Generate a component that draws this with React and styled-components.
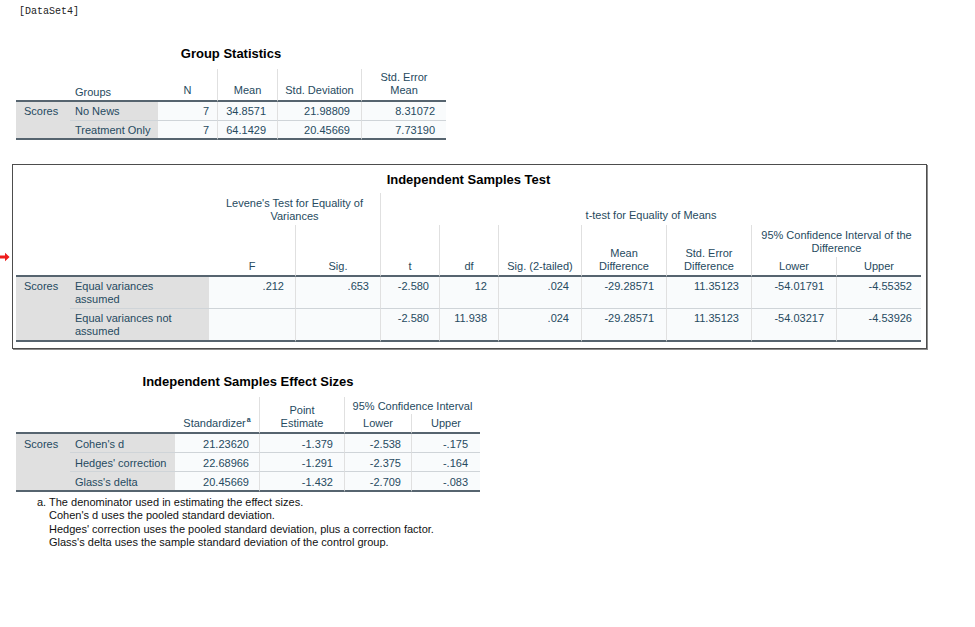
import React from 'react';
import styled, { createGlobalStyle } from 'styled-components';

const Global = createGlobalStyle`
  html, body { margin: 0; padding: 0; background: #ffffff; }
  body { font-family: "Liberation Sans", Arial, sans-serif; }
`;

const INK = '#264a60';
const RULE = '#56646f';
const GRID = '#e0e0e0';
const SEP = '#cfd4d8';

const Page = styled.div`
  position: relative;
  width: 975px;
  height: 627px;
  overflow: hidden;
  box-sizing: border-box;
  padding-top: 6px;
  display: flex;
  flex-direction: column;
  align-items: flex-start;
`;

const DataSetLabel = styled.div`
  margin-left: 19px;
  font-family: "Liberation Mono", "Courier New", monospace;
  font-size: 10px;
  line-height: 12px;
  color: #222;
`;

const Section = styled.section`
  position: relative;
  display: flex;
  flex-direction: column;
  margin-left: ${p => p.$ml}px;
  margin-top: ${p => p.$mt}px;
`;

const BoxedSection = styled(Section)`
  border: 1px solid #4d4d4d;
  box-shadow: 1px 1px 0 #8c8c8c;
  padding: 7px 5px 6px 3px;
`;

const Title = styled.div`
  text-align: center;
  font-weight: bold;
  font-size: 13px;
  line-height: 16px;
  color: #000;
  margin-bottom: ${p => p.$gap}px;
`;

const Table = styled.table`
  border-collapse: separate;
  border-spacing: 0;
  table-layout: fixed;
  font-size: 11px;
  color: ${INK};
`;

const Col = styled.col`
  width: ${p => p.$w}px;
`;

const Row = styled.tr`
  height: ${p => p.$h}px;
`;

const HeadCell = styled.th`
  box-sizing: border-box;
  padding: 0 2px ${p => (p.$pb ?? 3)}px;
  font-weight: normal;
  text-align: center;
  vertical-align: bottom;
  line-height: 13px;
  background: #ffffff;
  white-space: nowrap;
  border-left: ${p => (p.$divider ? `1px solid ${GRID}` : '0')};
  border-bottom: ${p => (p.$base ? `2px solid ${RULE}` : '0')};
`;

const StubHead = styled(HeadCell)`
  text-align: left;
  padding-left: 5px;
`;

const Sup = styled.sup`
  font-size: 7px;
  font-weight: bold;
  line-height: 0;
  vertical-align: 5px;
  margin-left: 1px;
`;

const StubCell = styled.td`
  box-sizing: border-box;
  background: #e0e0e0;
  text-align: left;
  vertical-align: top;
  white-space: nowrap;
  line-height: 13px;
  padding: ${p => p.$pt}px 4px 0 ${p => p.$pl}px;
  border-bottom: ${p => (p.$last ? `2px solid ${RULE}` : `1px solid ${SEP}`)};
`;

const ValueCell = styled.td`
  box-sizing: border-box;
  background: #f9fbfc;
  text-align: right;
  vertical-align: top;
  white-space: nowrap;
  line-height: 13px;
  padding: ${p => p.$pt}px ${p => p.$pr ?? 11}px 0 2px;
  border-left: ${p => (p.$first ? '0' : `1px solid ${GRID}`)};
  border-bottom: ${p => (p.$last ? `2px solid ${RULE}` : `1px solid ${SEP}`)};
`;

const Footnote = styled.div`
  margin-top: 4px;
  padding-left: 21px;
  font-size: 11px;
  line-height: 13.33px;
  color: #111;
`;

const FootLine = styled.div`
  padding-left: ${p => (p.$indent ? 12 : 0)}px;
  white-space: nowrap;
`;

const Marker = styled.svg`
  position: absolute;
  left: -13px;
  top: 87px;
  width: 10px;
  height: 10px;
`;

function ValueRow({ h, stub, cells, last, rowLabel, rowSpan, pr, pt = 4 }) {
  return (
    <Row $h={h}>
      {rowLabel && (
        <StubCell rowSpan={rowSpan} $pl={8} $pt={pt} $last>
          {rowLabel}
        </StubCell>
      )}
      <StubCell $pl={5} $pt={pt} $last={last}>
        {stub}
      </StubCell>
      {cells.map((v, i) => (
        <ValueCell key={i} $first={i === 0} $last={last} $pt={pt} $pr={pr ? pr[i] : undefined}>
          {v}
        </ValueCell>
      ))}
    </Row>
  );
}

function GroupStatistics() {
  const rows = [
    ['No News', ['7', '34.8571', '21.98809', '8.31072']],
    ['Treatment Only', ['7', '64.1429', '20.45669', '7.73190']],
  ];
  return (
    <Section $ml={16} $mt={28}>
      <Title $gap={7}>Group Statistics</Title>
      <Table>
        <colgroup>
          {[54, 88, 59, 60, 84, 85].map((w, i) => (
            <Col key={i} $w={w} />
          ))}
        </colgroup>
        <thead>
          <Row $h={33}>
            <HeadCell $base />
            <StubHead $base $pb={1}>Groups</StubHead>
            <HeadCell $base $pb={3}>N</HeadCell>
            <HeadCell $base $divider $pb={3}>Mean</HeadCell>
            <HeadCell $base $divider $pb={3}>Std. Deviation</HeadCell>
            <HeadCell $base $divider $pb={3}>Std. Error<br />Mean</HeadCell>
          </Row>
        </thead>
        <tbody>
          {rows.map(([stub, cells], i) => (
            <ValueRow
              key={stub}
              h={19}
              pt={3}
              stub={stub}
              cells={cells}
              last={i === rows.length - 1}
              rowLabel={i === 0 ? 'Scores' : null}
              rowSpan={rows.length}
              pr={[8, 11, 11, 11]}
            />
          ))}
        </tbody>
      </Table>
    </Section>
  );
}

function IndependentSamplesTest() {
  const rows = [
    [<>Equal variances<br />assumed</>, ['.212', '.653', '-2.580', '12', '.024', '-29.28571', '11.35123', '-54.01791', '-4.55352']],
    [<>Equal variances not<br />assumed</>, ['', '', '-2.580', '11.938', '.024', '-29.28571', '11.35123', '-54.03217', '-4.53926']],
  ];
  return (
    <BoxedSection $ml={12} $mt={24}>
      <Marker viewBox="0 0 10 10">
        <path d="M0 3.6 H5 V0.8 L9.6 5 L5 9.2 V6.4 H0 Z" fill="#ee1c1c" />
      </Marker>
      <Title $gap={5}>Independent Samples Test</Title>
      <Table>
        <colgroup>
          {[54, 139, 86, 85, 59, 59, 83, 85, 85, 85, 85].map((w, i) => (
            <Col key={i} $w={w} />
          ))}
        </colgroup>
        <thead>
          <Row $h={32}>
            <HeadCell colSpan={2} rowSpan={3} $base />
            <HeadCell colSpan={2} $pb={2}>Levene's Test for Equality of<br />Variances</HeadCell>
            <HeadCell colSpan={7} $divider $pb={3}>t-test for Equality of Means</HeadCell>
          </Row>
          <Row $h={32}>
            <HeadCell rowSpan={2} $base $pb={2}>F</HeadCell>
            <HeadCell rowSpan={2} $base $divider $pb={2}>Sig.</HeadCell>
            <HeadCell rowSpan={2} $base $divider $pb={2}>t</HeadCell>
            <HeadCell rowSpan={2} $base $divider $pb={2}>df</HeadCell>
            <HeadCell rowSpan={2} $base $divider $pb={2}>Sig. (2-tailed)</HeadCell>
            <HeadCell rowSpan={2} $base $divider $pb={2}>Mean<br />Difference</HeadCell>
            <HeadCell rowSpan={2} $base $divider $pb={2}>Std. Error<br />Difference</HeadCell>
            <HeadCell colSpan={2} $divider $pb={2}>95% Confidence Interval of the<br />Difference</HeadCell>
          </Row>
          <Row $h={20}>
            <HeadCell $base $divider $pb={2}>Lower</HeadCell>
            <HeadCell $base $divider $pb={2}>Upper</HeadCell>
          </Row>
        </thead>
        <tbody>
          {rows.map(([stub, cells], i) => (
            <ValueRow
              key={i}
              h={i === rows.length - 1 ? 33 : 32}
              pt={3}
              stub={stub}
              cells={cells}
              last={i === rows.length - 1}
              rowLabel={i === 0 ? 'Scores' : null}
              rowSpan={rows.length}
              pr={[11, 11, 10, 11, 12, 12, 12, 12, 9]}
            />
          ))}
        </tbody>
      </Table>
    </BoxedSection>
  );
}

function EffectSizes() {
  const rows = [
    ["Cohen's d", ['21.23620', '-1.379', '-2.538', '-.175']],
    ["Hedges' correction", ['22.68966', '-1.291', '-2.375', '-.164']],
    ["Glass's delta", ['20.45669', '-1.432', '-2.709', '-.083']],
  ];
  return (
    <Section $ml={16} $mt={25}>
      <Title $gap={7}>Independent Samples Effect Sizes</Title>
      <Table>
        <colgroup>
          {[54, 105, 84, 85, 67, 69].map((w, i) => (
            <Col key={i} $w={w} />
          ))}
        </colgroup>
        <thead>
          <Row $h={17}>
            <HeadCell colSpan={2} rowSpan={2} $base />
            <HeadCell rowSpan={2} $base $pb={2}>Standardizer<Sup>a</Sup></HeadCell>
            <HeadCell rowSpan={2} $base $divider $pb={2}>Point<br />Estimate</HeadCell>
            <HeadCell colSpan={2} $divider $pb={1}>95% Confidence Interval</HeadCell>
          </Row>
          <Row $h={20}>
            <HeadCell $base $divider $pb={2}>Lower</HeadCell>
            <HeadCell $base $divider $pb={2}>Upper</HeadCell>
          </Row>
        </thead>
        <tbody>
          {rows.map(([stub, cells], i) => (
            <ValueRow
              key={stub}
              h={i === rows.length - 1 ? 20 : 19}
              stub={stub}
              cells={cells}
              last={i === rows.length - 1}
              rowLabel={i === 0 ? 'Scores' : null}
              rowSpan={rows.length}
              pr={[10, 11, 10, 12]}
            />
          ))}
        </tbody>
      </Table>
      <Footnote>
        <FootLine>a. The denominator used in estimating the effect sizes.</FootLine>
        <FootLine $indent>Cohen's d uses the pooled standard deviation.</FootLine>
        <FootLine $indent>Hedges' correction uses the pooled standard deviation, plus a correction factor.</FootLine>
        <FootLine $indent>Glass's delta uses the sample standard deviation of the control group.</FootLine>
      </Footnote>
    </Section>
  );
}

export default function App() {
  return (
    <Page>
      <Global />
      <DataSetLabel>[DataSet4]</DataSetLabel>
      <GroupStatistics />
      <IndependentSamplesTest />
      <EffectSizes />
    </Page>
  );
}
